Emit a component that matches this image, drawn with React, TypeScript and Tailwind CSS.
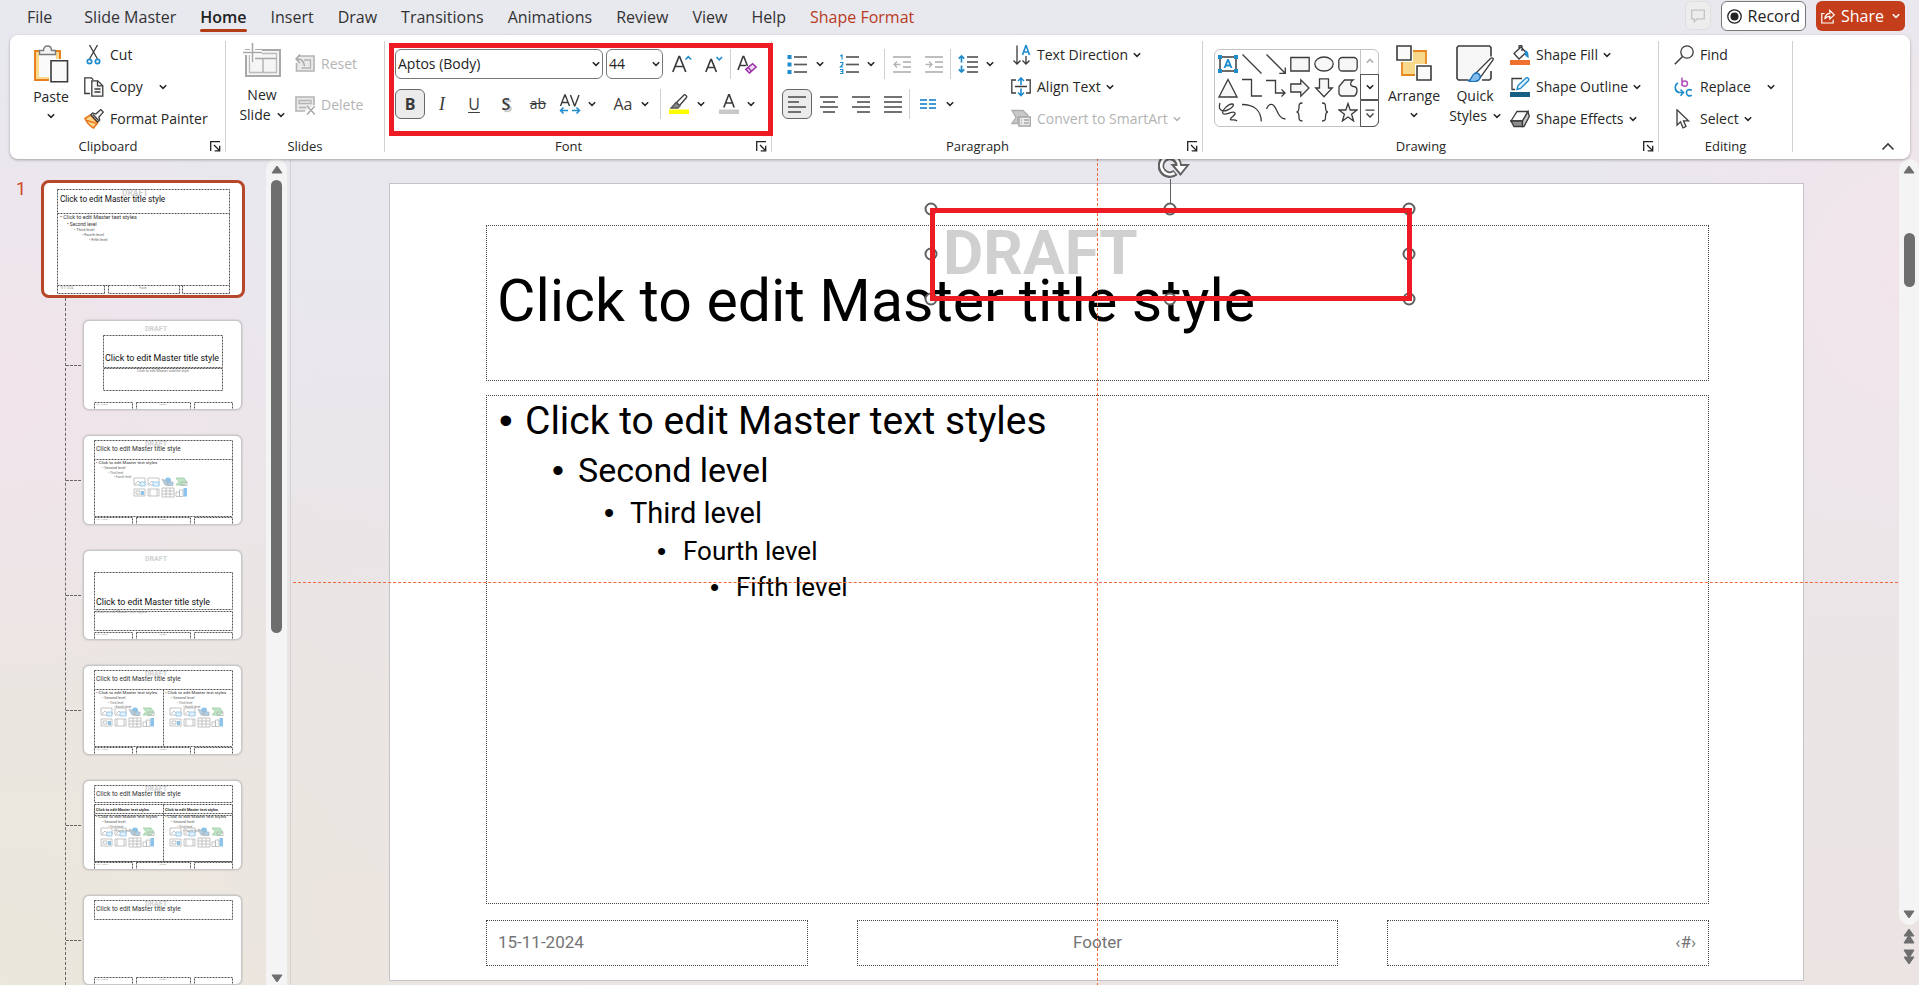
import type { ReactNode } from "react";

const INK = "#3b3b3b";
const BLUE = "#1e8bcd";

/* ---------- small building blocks ---------- */

function Icon({ w = 20, h = 20, children, className = "" }: { w?: number; h?: number; children: ReactNode; className?: string }) {
  return (
    <svg width={w} height={h} viewBox={`0 0 ${w} ${h}`} fill="none" stroke={INK} strokeWidth="1.3" aria-hidden="true" className={`shrink-0 ${className}`}>
      {children}
    </svg>
  );
}

function Chevron({ up = false, className = "" }: { up?: boolean; className?: string }) {
  return (
    <svg width="8" height="6" viewBox="0 0 8 6" fill="none" stroke="currentColor" strokeWidth="1.5" aria-hidden="true" className={`shrink-0 ${className}`}>
      <path d={up ? "M.8 4.6 4 1.4l3.2 3.2" : "M.8 1.2 4 4.4l3.2-3.2"} />
    </svg>
  );
}

function MenuArrow({ label, className = "" }: { label: string; className?: string }) {
  return (
    <button type="button" aria-label={label} className={`flex h-[30px] w-3 shrink-0 items-center justify-center ${className}`}>
      <Chevron />
    </button>
  );
}

function Tool({ label, active = false, className = "", children }: { label: string; active?: boolean; className?: string; children: ReactNode }) {
  return (
    <button
      type="button"
      aria-label={label}
      className={`flex h-[30px] shrink-0 items-center justify-center ${active ? "w-[30px] rounded-md border border-[#666] bg-[#ebebeb]" : "w-8"} ${className}`}
    >
      {children}
    </button>
  );
}

function Divider({ className = "" }: { className?: string }) {
  return <span className={`h-[30px] w-px shrink-0 bg-[#d0d0d0] ${className}`} />;
}

function Command({ icon, label, menu = false, disabled = false }: { icon: ReactNode; label: string; menu?: boolean; disabled?: boolean }) {
  return (
    <button type="button" disabled={disabled} className={`flex h-7 items-center gap-1.5 whitespace-nowrap ${disabled ? "text-[#b4b4b4]" : ""}`}>
      {icon}
      <span>{label}</span>
      {menu && <Chevron className="-ml-px" />}
    </button>
  );
}

function Group({ name, width, launcher = true, children }: { name: string; width: string; launcher?: boolean; children: ReactNode }) {
  return (
    <section aria-label={name} className={`flex h-[111px] shrink-0 flex-col justify-between border-r border-[#cfcfcf] ${width}`}>
      <div className="flex items-start">{children}</div>
      <div className="flex items-end text-[13px] leading-[11px]">
        <span className="flex-1 text-center">{name}</span>
        {launcher && (
          <button type="button" aria-label={`${name} options`} className="flex w-[19px] justify-end pr-1">
            <Icon w={11} h={11}>
              <path d="M.7 10V.7H10M4 4l5 5M9.7 4.8v5h-5" stroke="#222" />
            </Icon>
          </button>
        )}
      </div>
    </section>
  );
}

/* ---------- header ---------- */

const tabs = ["File", "Slide Master", "Home", "Insert", "Draw", "Transitions", "Animations", "Review", "View", "Help", "Shape Format"];

function TabBar() {
  return (
    <header className="flex h-[35px] shrink-0 items-start justify-between pr-3.5 pl-[27px] text-base">
      <nav className="flex gap-6 text-[#333]">
        {tabs.map((t) => (
          <a
            key={t}
            href="#"
            className={`flex h-[33px] items-center whitespace-nowrap ${t === "File" ? "mr-2" : ""} ${t === "Home" ? "relative font-semibold text-[#222]" : ""} ${t === "Shape Format" ? "text-[#b83b1d]" : ""}`}
          >
            {t}
            {t === "Home" && <span className="absolute inset-x-0 bottom-px h-[3px] rounded-full bg-[#b23a15]" />}
          </a>
        ))}
      </nav>
      <div className="flex gap-2.5 pt-px">
        <button type="button" aria-label="Comments" className="flex h-[29px] w-[26px] items-center justify-center rounded-md border border-[#dedede] bg-[#ededee]">
          <Icon w={14} h={14}>
            <path d="M.7 1.2h12.6v8.6H6.2l-3 3v-3H.7z" stroke="#c3c3c3" />
          </Icon>
        </button>
        <button type="button" className="flex h-[30px] items-center gap-1.5 rounded-md border border-[#777] bg-white px-[5px] text-[#222]">
          <Icon w={15} h={15}>
            <circle cx="7.5" cy="7.5" r="6.7" stroke="#222" />
            <circle cx="7.5" cy="7.5" r="4" fill="#222" stroke="none" />
          </Icon>
          Record
        </button>
        <button type="button" className="flex h-[30px] items-center gap-1.5 rounded-md bg-[#c43e1c] px-[5px] text-white">
          <Icon w={14} h={16}>
            <path d="M3.5 5.5H.8V15h11.4v-3.2M3.8 11c.3-3.800 2-5.500 5-5.700V2.500L13.300 6.900 8.800 11V8.300C6.500 8.300 5 9 3.800 11z" stroke="white" strokeWidth="1.2" />
          </Icon>
          Share
          <Chevron className="ml-0.5" />
        </button>
      </div>
    </header>
  );
}

/* ---------- ribbon groups ---------- */

function ClipboardGroup() {
  return (
    <Group name="Clipboard" width="w-[216px]">
      <button type="button" className="ml-[17px] flex w-12 flex-col items-center pt-1 leading-5">
        <Icon w={36} h={38}>
          <path d="M2 6h25v29H2z" fill="#f9d98d" stroke="#e8801d" strokeWidth="2" />
          <path d="M6 9h17v23H6z" fill="#fafafa" stroke="none" />
          <path d="M6.500 9.500V5.500h4c0-3 1.500-4.500 4-4.500s4 1.500 4 4.500h4v4z" fill="#f3f3f3" stroke="#7a7a7a" strokeWidth="1.400" />
          <path d="M16 14h20v24H16z" fill="white" stroke="none" />
          <path d="M18 15.700h16.500v21H18z" fill="#fafafa" strokeWidth="1.600" />
        </Icon>
        <span className="mt-1">Paste</span>
        <Chevron className="mt-1.5" />
      </button>
      <div className="ml-[9px] flex flex-col gap-1">
        <Command
          label="Cut"
          icon={
            <Icon>
              <path d="M5.500 0l8 14M13.500 0l-8 14" />
              <circle cx="5.500" cy="16.500" r="2.200" stroke={BLUE} strokeWidth="1.700" />
              <circle cx="13.500" cy="16.500" r="2.200" stroke={BLUE} strokeWidth="1.700" />
            </Icon>
          }
        />
        <div className="flex">
          <Command
            label="Copy"
            icon={
              <Icon>
                <path d="M6 16.500H.8V.800h6.500l2 2" />
                <path d="M7.800 3.800h6l5 5v10.400h-11z" fill="#f6f6f6" />
                <path d="M13.500 3.800v5h5M10.500 12h6M10.500 15h6" />
              </Icon>
            }
          />
          <MenuArrow label="Copy options" className="-my-px ml-3.5" />
        </div>
        <Command
          label="Format Painter"
          icon={
            <Icon>
              <path d="M1 9.500 6.500 6l7 8-4 5C6 17 3 14 1 9.500z" fill="#fbd68d" stroke="#e8741a" strokeWidth="1.600" />
              <path d="M3 11.500c4 1 7 2 9.500 3" stroke="#e8741a" />
              <path d="M6.800 5.800l2-1.800 3 1 5-4.500 2.500 2.600-4.400 5 .8 3-2 2z" fill="#f6f6f6" />
              <path d="M9 5.500l5.500 6" />
            </Icon>
          }
        />
      </div>
    </Group>
  );
}

function SlidesGroup() {
  return (
    <Group name="Slides" width="w-[159px]" launcher={false}>
      <button type="button" className="ml-2 flex w-14 flex-col items-center pt-0.5 leading-5">
        <Icon w={38} h={34}>
          <path d="M3 7h34v26H3z" fill="#f5f5f5" stroke="#a9a9a9" strokeWidth="2" />
          <path d="M6.500 10.500h27v19h-27z" fill="#f5f5f5" stroke="#bcbcbc" />
          <path d="M6.500 15.500h27M20 15.500v14" stroke="#a9a9a9" />
          <path d="M0 9.500h19M9.500 0v19" stroke="white" strokeWidth="5" />
          <path d="M0 9.500h19M9.500 0v19" stroke="#a9a9a9" strokeWidth="1.600" />
        </Icon>
        <span className="mt-2">New</span>
        <span className="flex items-center gap-1.5">
          Slide <Chevron />
        </span>
      </button>
      <div className="ml-[5px] flex flex-col gap-[13px] pt-[9px]">
        <Command
          disabled
          label="Reset"
          icon={
            <Icon>
              <path d="M3 2h16v15H1.500V9" fill="#e9e9e9" stroke="#b4b4b4" strokeWidth="1.600" />
              <path d="M9 6h6.500v8h-9" stroke="#b4b4b4" />
              <path d="M5 .500 1 5l4 4M1.500 5C6 4.500 9 7 9.500 12" stroke="#a8a8a8" strokeWidth="1.500" />
            </Icon>
          }
        />
        <Command
          disabled
          label="Delete"
          icon={
            <Icon>
              <path d="M10 16H1V2h18v8" fill="#e9e9e9" stroke="#b4b4b4" strokeWidth="1.600" />
              <path d="M4 5.500h12v3H4zM4 12.500h7" stroke="#b4b4b4" />
              <path d="M12 11l8 8.500M20 11l-8 8.500" stroke="#a8a8a8" strokeWidth="1.500" />
            </Icon>
          }
        />
      </div>
    </Group>
  );
}

function Letter({ children, className = "" }: { children: ReactNode; className?: string }) {
  return <span className={`leading-none text-[#3b3b3b] ${className}`}>{children}</span>;
}

function FontGroup() {
  return (
    <Group name="Font" width="w-[387px]">
      <div className="relative flex flex-col gap-2.5 pt-2 pl-2.5">
        <div className="flex">
          <div className="relative mr-[3px]">
            <select aria-label="Font name" className="block h-[30px] w-52 appearance-none rounded-md border border-[#777] bg-white pl-0.5 text-[#222]">
              <option>Aptos (Body)</option>
            </select>
            <Chevron className="pointer-events-none absolute top-3 right-[3px]" />
          </div>
          <div className="relative mr-[3px]">
            <select aria-label="Font size" className="block h-[30px] w-[57px] appearance-none rounded-md border border-[#777] bg-white pl-0.5 text-[#222]">
              <option>44</option>
            </select>
            <Chevron className="pointer-events-none absolute top-3 right-[3px]" />
          </div>
          <Tool label="Increase font size">
            <Icon>
              <path d="M.8 18 7 2.500h.600L13.800 18M3 12.500h8.600" strokeWidth="1.700" />
              <path d="M13.500 5.500 16.300 2.700l2.800 2.800" stroke={BLUE} strokeWidth="1.600" />
            </Icon>
          </Tool>
          <Tool label="Decrease font size">
            <Icon>
              <path d="M1.800 18 6.800 5.500h.600l5 12.500M3.700 13.500h6.800" strokeWidth="1.700" />
              <path d="M12.500 3l2.800 2.800L18.100 3" stroke={BLUE} strokeWidth="1.600" />
            </Icon>
          </Tool>
          <Divider />
          <Tool label="Clear formatting">
            <Icon>
              <path d="M1 16 6 2.500h.800L10.500 12M3 11.500h6" strokeWidth="1.600" />
              <path d="M8.800 15.300l6.800-5.600 3.600 3.300-6.700 6z" fill="#f3ddf5" stroke="#9a31a8" strokeWidth="1.600" />
              <path d="M11 13.500l3.500 3.500" stroke="#9a31a8" strokeWidth="1.500" />
            </Icon>
          </Tool>
        </div>
        <div className="flex">
          <Tool label="Bold" active className="mr-px">
            <Letter className="text-base font-bold">B</Letter>
          </Tool>
          <Tool label="Italic">
            <Letter className="font-['Liberation_Serif',serif] text-lg italic">I</Letter>
          </Tool>
          <Tool label="Underline">
            <Letter className="text-base underline underline-offset-2">U</Letter>
          </Tool>
          <Tool label="Text shadow">
            <Letter className="text-base font-semibold [text-shadow:2px_2px_1px_#bbb]">S</Letter>
          </Tool>
          <Tool label="Strikethrough">
            <Letter className="text-sm line-through">ab</Letter>
          </Tool>
          <Tool label="Character spacing">
            <Icon w={22}>
              <path d="M1.500 12 5.800 1h.400l4.300 11M3 8.500h6M11.500 1l4 10.800h.400L20 1" strokeWidth="1.400" />
              <path d="M1.500 16.500h7.500M4.500 13.500l-3 3 3 3M13 16.500h7.500M17.500 13.500l3 3-3 3" stroke={BLUE} strokeWidth="1.500" />
            </Icon>
          </Tool>
          <MenuArrow label="Character spacing options" className="mr-[9px]" />
          <Tool label="Change case">
            <Letter className="text-base">Aa</Letter>
          </Tool>
          <MenuArrow label="Change case options" className="mr-[9px]" />
          <Divider className="mr-0.5" />
          <Tool label="Text highlight">
            <Icon>
              <path d="M7.500 8.500 15 1c1-1 3.500 1.300 2.500 2.500l-7 8z" fill="#fafafa" />
              <path d="M7 8.500l4 3.500-2 2H2z" fill="#8a8a8a" stroke="#555" />
              <path d="M0 15.500h20v4.500H0z" fill="#ffff00" stroke="none" />
            </Icon>
          </Tool>
          <MenuArrow label="Text highlight options" className="mr-1.5" />
          <Tool label="Font color">
            <Icon>
              <path d="M4.800 13.500 9.700.800h.600l4.900 12.700M6.600 9h6.800" strokeWidth="1.600" />
              <path d="M0 15.500h20v4.500H0z" fill="#c8c8c8" stroke="none" />
            </Icon>
          </Tool>
          <MenuArrow label="Font color options" />
        </div>
        <div className="pointer-events-none absolute top-0.5 left-1 h-[93px] w-[384px] border-[5px] border-[#ed1c24]" />
      </div>
    </Group>
  );
}

function Lines({ rows, color = "#5a5a5a" }: { rows: [number, number, number][]; color?: string }) {
  return (
    <>
      {rows.map(([x1, x2, y]) => (
        <path key={y} d={`M${x1} ${y}H${x2}`} stroke={color} strokeWidth="1.7" />
      ))}
    </>
  );
}

function ParagraphGroup() {
  return (
    <Group name="Paragraph" width="w-[431px]">
      <div className="flex w-[230px] flex-col gap-2.5 pt-2 pl-[9px]">
        <div className="flex">
          <Tool label="Bullets">
            <Icon>
              <path d="M.500 1h4v4h-4zM.500 8.500h4v4h-4zM.500 16h4v4h-4z" fill={BLUE} stroke="none" />
              <Lines rows={[[7, 20, 3], [7, 20, 10.5], [7, 20, 18]]} />
            </Icon>
          </Tool>
          <MenuArrow label="Bullet options" className="mr-[7px] ml-px" />
          <Tool label="Numbering">
            <Icon>
              <path d="M1.300 2 3 1v4.500M1 8.500h2.800v2L1.300 13h2.900M1 15.500h2.800v4H1M1.500 17.500h2.300" stroke={BLUE} strokeWidth="1.200" />
              <Lines rows={[[7, 20, 3], [7, 20, 10.5], [7, 20, 18]]} />
            </Icon>
          </Tool>
          <MenuArrow label="Numbering options" className="mr-[7px]" />
          <Divider className="mr-px" />
          <Tool label="Decrease indent">
            <Icon>
              <Lines color="#b4b4b4" rows={[[1, 19, 3], [11, 19, 8], [11, 19, 13], [1, 19, 18]]} />
              <path d="M8.500 10.500H2M5 7.500l-3 3 3 3" stroke="#b4b4b4" />
            </Icon>
          </Tool>
          <Tool label="Increase indent">
            <Icon>
              <Lines color="#b4b4b4" rows={[[1, 19, 3], [11, 19, 8], [11, 19, 13], [1, 19, 18]]} />
              <path d="M1.500 10.500H8M5 7.500l3 3-3 3" stroke="#b4b4b4" />
            </Icon>
          </Tool>
          <Divider className="mr-px" />
          <Tool label="Line spacing">
            <Icon>
              <path d="M3.500 2v6.500M.800 4.700l2.700-2.700 2.700 2.700M3.500 11.500V18M.800 15.300 3.500 18l2.700-2.700" stroke={BLUE} strokeWidth="1.700" />
              <Lines rows={[[9, 20, 3], [9, 20, 8], [9, 20, 13], [9, 20, 18]]} />
            </Icon>
          </Tool>
          <MenuArrow label="Line spacing options" />
        </div>
        <div className="flex">
          <Tool label="Align left" active className="mr-px ml-px">
            <Icon>
              <Lines rows={[[1, 19, 3], [1, 12, 8], [1, 19, 13], [1, 14, 18]]} />
            </Icon>
          </Tool>
          <Tool label="Align center">
            <Icon>
              <Lines rows={[[1, 19, 3], [4, 16, 8], [1, 19, 13], [4, 16, 18]]} />
            </Icon>
          </Tool>
          <Tool label="Align right">
            <Icon>
              <Lines rows={[[1, 19, 3], [6, 19, 8], [1, 19, 13], [6, 19, 18]]} />
            </Icon>
          </Tool>
          <Tool label="Justify">
            <Icon>
              <Lines rows={[[1, 19, 3], [1, 19, 8], [1, 19, 13], [1, 19, 18]]} />
            </Icon>
          </Tool>
          <Divider className="mr-0.5" />
          <Tool label="Columns">
            <Icon>
              <Lines color={BLUE} rows={[[2, 9, 6], [2, 9, 10], [2, 9, 14]]} />
              <Lines color={BLUE} rows={[[11, 18, 6], [11, 18, 10], [11, 18, 14]]} />
            </Icon>
          </Tool>
          <MenuArrow label="Column options" />
        </div>
      </div>
      <div className="ml-[9px] flex flex-col gap-1">
        <Command
          menu
          label="Text Direction"
          icon={
            <Icon>
              <path d="M6 .500V19M2.500 15.500 6 19l3.500-3.500M15 11v8M11.500 15.500 15 19l3.500-3.500" />
              <path d="M11.500 10 14.800.800h.400L18.500 10M12.700 7h4.600" stroke={BLUE} strokeWidth="1.600" />
            </Icon>
          }
        />
        <Command
          menu
          label="Align Text"
          icon={
            <Icon>
              <path d="M5 3H.800v13H5M15 3h4.200v13H15M4 9.500h12" />
              <path d="M10 8V1M7 4l3-3 3 3M10 11.500v7M7 15.500l3 3 3-3" stroke={BLUE} strokeWidth="1.600" />
            </Icon>
          }
        />
        <Command
          menu
          disabled
          label="Convert to SmartArt"
          icon={
            <Icon>
              <path d="M1 1.500h11l5 5-2 2H7v6H1l4-6z" fill="#c9c9c9" stroke="#adadad" />
              <path d="M8 8h11.500v9H8z" fill="#ededed" stroke="#a5a5a5" strokeWidth="1.500" />
              <path d="M10 11h1M13 11h5M10 14h1M13 14h5" stroke="#a5a5a5" />
            </Icon>
          }
        />
      </div>
    </Group>
  );
}

const shapes: { name: string; art: ReactNode }[] = [
  {
    name: "Text box",
    art: (
      <>
        <path d="M2 3h16v14H2z" strokeWidth="1.500" />
        <path d="M0 1h4v4H0zM16 1h4v4h-4zM0 15h4v4H0zM16 15h4v4h-4z" fill={BLUE} stroke="none" />
        <path d="M6.500 14 9.800 6h.400l3.300 8M7.800 11.500h4.400" stroke={BLUE} strokeWidth="1.800" />
      </>
    ),
  },
  { name: "Line", art: <path d="M.500.500l19 19" /> },
  { name: "Arrow", art: <path d="M.500.500l19 19M19.300 13.500v6h-6" /> },
  { name: "Rectangle", art: <path d="M.800 3.500h18.400v13.500H.800z" fill="#f7f7f7" /> },
  { name: "Oval", art: <ellipse cx="10" cy="10" rx="9.200" ry="7" fill="#f7f7f7" /> },
  { name: "Rounded rectangle", art: <rect x=".8" y="3.5" width="18.4" height="13.5" rx="3.500" fill="#f7f7f7" /> },
  { name: "Triangle", art: <path d="M10 1.500 19 19H1z" fill="#f7f7f7" /> },
  { name: "Elbow connector", art: <path d="M0 1.500h9.500V18H20" /> },
  { name: "Elbow arrow", art: <path d="M0 2.500h9.500V15H19M15.500 11.500 19 15l-3.500 3.500" /> },
  { name: "Right arrow", art: <path d="M.800 6h10V1.800L19 10l-8.200 8.200V14H.800z" fill="#f7f7f7" /> },
  { name: "Down arrow", art: <path d="M5.500.800h9V10h3.800L10 18.800 1.700 10h3.800z" fill="#f7f7f7" /> },
  { name: "Freeform shape", art: <path d="M1 16V8.500L6.500 2h8.500c-3 2-3.500 6 .500 6.500 2 0 3.500 1.500 3.500 4 0 2.500-1 4.500-2.500 5.500H3z" fill="#f7f7f7" /> },
  { name: "Scribble", art: <path d="M2 1C0 7 3 10 8.500 8.500S17.500 2 14 2 3 8.500 5 11.500s9-3 11.500-1S13 15 12.500 17s4.500-.500 6.500 2" /> },
  { name: "Arc", art: <path d="M0 2.500c12 0 19 6 19.300 17" /> },
  { name: "Curve", art: <path d="M.500 7C3 1 7 .500 10 7s5 10 9.500 10" /> },
  { name: "Left brace", art: <path d="M12.500 1C9 1 9 2.500 9 5s0 5-2.500 5C9 10 9 12.500 9 15s0 4 3.500 4" /> },
  { name: "Right brace", art: <path d="M8 1c3.500 0 3.500 1.500 3.500 4s0 5 2.500 5c-2.500 0-2.500 2.500-2.500 5s0 4-3.500 4" /> },
  { name: "Star", art: <path d="M10 1.500l2.200 6.500H19l-5.400 4.200L15.600 19 10 15l-5.600 4 2-6.800L1 8h6.800z" fill="#f7f7f7" /> },
];

function DrawingGroup() {
  return (
    <Group name="Drawing" width="w-[456px]">
      <div className="mt-2 ml-[11px] flex h-[78px] rounded-md border border-[#c4c4c4]">
        <div className="grid grid-cols-6 py-0.5 pl-px">
          {shapes.map((s) => (
            <button key={s.name} type="button" aria-label={s.name} className="flex h-6 w-6 items-center justify-center">
              <Icon>{s.art}</Icon>
            </button>
          ))}
        </div>
        <div className="-my-px -mr-px flex w-[19px] flex-col">
          <button type="button" aria-label="Previous shapes" className="flex flex-1 items-center justify-center border-l border-[#c4c4c4] text-[#b0b0b0]">
            <Chevron up />
          </button>
          <button type="button" aria-label="Next shapes" className="flex flex-1 items-center justify-center border border-[#555]">
            <Chevron />
          </button>
          <button type="button" aria-label="All shapes" className="flex flex-1 items-center justify-center rounded-br-md border border-[#555]">
            <Icon w={10} h={10}>
              <path d="M.500 1.200h9M1.500 4.500 5 8l3.500-3.500" />
            </Icon>
          </button>
        </div>
      </div>
      <button type="button" className="ml-[7px] flex w-14 flex-col items-center pt-1 leading-5">
        <Icon w={36} h={36}>
          <path d="M6 6h24v24H6z" fill="#f8d98b" stroke="#e8871e" strokeWidth="1.800" />
          <path d="M0 0h17v17H0zM19 19h17v17H19z" fill="white" stroke="none" />
          <path d="M1 1h14v14H1zM21 21h14v14H21z" fill="#fafafa" strokeWidth="1.600" />
        </Icon>
        <span className="mt-[5px]">Arrange</span>
        <Chevron className="mt-1.5" />
      </button>
      <button type="button" className="ml-[5px] flex w-14 flex-col items-center pt-1 leading-5">
        <Icon w={38} h={37}>
          <path d="M12 35H2.500L1 33.500V2.500L2.500 1h31L35 2.500v9M35 26v7.500L33.500 35H26" fill="#f7f7f7" strokeWidth="1.600" />
          <path d="M20 28 34 14c2-2 4-1 3 1L24 33z" fill="white" />
          <path d="M12 35.500c4 0 3-5 6.500-7 3-1.500 6.500 1 5.500 4.500-1 3.500-7 5-12 2.500z" fill="#84bdeb" stroke="#1e6fb8" strokeWidth="1.400" />
        </Icon>
        <span className="mt-1">Quick</span>
        <span className="flex items-center gap-1.5">
          Styles <Chevron />
        </span>
      </button>
      <div className="ml-[7px] flex flex-col gap-1">
        <Command
          menu
          label="Shape Fill"
          icon={
            <Icon>
              <path d="M4 8.500 11 2l5 5.500-7 6.500zM9 4.500V1.500C9 0 12 0 12 1.500V6" fill="#fafafa" />
              <path d="M15 6c2 0 3 2 3 6-1.500-1-2.500-2-3-4" fill={BLUE} stroke={BLUE} />
              <path d="M0 15h20v5H0z" fill="#ee7130" stroke="none" />
            </Icon>
          }
        />
        <Command
          menu
          label="Shape Outline"
          icon={
            <Icon>
              <path d="M12 1.500H2v11h3" />
              <path d="M7 12.500l1-4L16 1c1.500-1 3.500 1 2.500 2.500L10.500 11.500z" fill="#e6f2fb" stroke={BLUE} strokeWidth="1.400" />
              <path d="M0 15h20v5H0z" fill="#155f82" stroke="none" />
            </Icon>
          }
        />
        <Command
          menu
          label="Shape Effects"
          icon={
            <Icon>
              <path d="M1 12 7 2.500h11L12.500 12z" fill="#fafafa" />
              <path d="M1 12h11.500v5.500H4z" fill="#8f8f8f" />
              <path d="M12.500 12 18 2.500l1.300 5-5.300 10h-1.500z" fill="#c6c6c6" />
            </Icon>
          }
        />
      </div>
    </Group>
  );
}

function EditingGroup() {
  return (
    <Group name="Editing" width="w-[134px]" launcher={false}>
      <div className="ml-[15px] flex flex-col gap-1">
        <Command
          label="Find"
          icon={
            <Icon>
              <circle cx="13" cy="7" r="6.200" fill="#fafafa" />
              <path d="M8.500 11.500.800 19.300" strokeWidth="1.500" />
            </Icon>
          }
        />
        <div className="flex">
          <Command
            label="Replace"
            icon={
              <Icon>
                <path d="M8 .500v8.500M8 6.500c0-3.500 5.500-3.500 5.500 0s-5.500 3.500-5.500 0" stroke="#b14fbd" strokeWidth="1.500" />
                <path d="M17.800 13.200c-4-1.800-5.500.800-5.300 2.800s2 3.800 5.300 2.300M4 6C0 8 .500 14.500 5 15.500h4M6.500 12.500l3 3-3 3.300" stroke={BLUE} strokeWidth="1.600" />
              </Icon>
            }
          />
          <MenuArrow label="Replace options" className="-my-px ml-3.5" />
        </div>
        <Command
          menu
          label="Select"
          icon={
            <Icon>
              <path d="M3 .800v15.500l3.500-3.500 2.500 6 3-1.300-2.500-5.700h5z" fill="#fafafa" />
            </Icon>
          }
        />
      </div>
    </Group>
  );
}

function Ribbon() {
  return (
    <div className="relative z-10 mr-[9px] ml-2.5 flex h-[124px] shrink-0 rounded-lg bg-white py-1.5 shadow-[0_1px_3px_rgba(0,0,0,0.3)]">
      <ClipboardGroup />
      <SlidesGroup />
      <FontGroup />
      <ParagraphGroup />
      <DrawingGroup />
      <EditingGroup />
      <div className="flex flex-1 items-end justify-end pr-[15px]">
        <button type="button" aria-label="Collapse ribbon">
          <Icon w={14} h={12}>
            <path d="M1.500 8.500 7 3l5.500 5.500" strokeWidth="1.600" />
          </Icon>
        </button>
      </div>
    </div>
  );
}

/* ---------- thumbnails ---------- */

function Dashed({ x, y, w, h }: { x: number; y: number; w: number; h: number }) {
  return <rect x={x + 0.5} y={y + 0.5} width={w} height={h} fill="none" stroke="#555" strokeDasharray="2 1" />;
}

/* A frame without its top edge, for a box that hangs from the one above it. */
function OpenFrame({ x, y, w, h, split = false }: { x: number; y: number; w: number; h: number; split?: boolean }) {
  const left = x + 0.5;
  const top = y + 0.5;
  return (
    <g fill="none" stroke="#555" strokeDasharray="2 1">
      <path d={`M${left} ${top}v${h}h${w}`} />
      <path d={`M${left + w} ${top}v${h}`} />
      {split && <path d={`M${left + w / 2} ${top}v${h}`} />}
    </g>
  );
}

function Words({ x, y, size, children, bold = false, fill = "#333", anchor = "start" }: { x: number; y: number; size: number; children: ReactNode; bold?: boolean; fill?: string; anchor?: "start" | "middle" | "end" }) {
  return (
    <text x={x} y={y} fontSize={size} fontWeight={bold ? 700 : 400} fill={fill} textAnchor={anchor}>
      {children}
    </text>
  );
}

function Placeholders({ x, y }: { x: number; y: number }) {
  return (
    <g transform={`translate(${x} ${y})`} fill="none" stroke="#b5b5b5" strokeWidth=".8">
      <path d="M1 1h11v7H1zM2 7l3-3 3 3M15 1h11v7H15zM16 7l3-3 3 3" />
      <path d="M7 5h5v4H7zM20 5h6v4h-6z" fill="#e3f1fb" stroke="#8cc3ea" />
      <circle cx="35" cy="3.500" r="3" fill="#8cc3ea" stroke="none" />
      <path d="M29 2l6 3v3h-3zM34 5h6v3.500h-6z" fill="#a9d1ee" />
      <path d="M43 1h8l3 4-3 3h-8l3-3.500z" fill="#bfe5c5" stroke="#9ccba4" />
      <path d="M48 5h6v3.500h-6zM1 12h11v7H1zM3 14h4v3H3zM15 12h11v7H15zM17 12v7M24 12v7M29 11h12v9H29zM29 14h12M29 17h12M33 11v9M37 11v9M43 15h3.500v4.500H43zM46.500 13H50v6.500h-3.500z" />
      <path d="M50.500 11H54v8.500h-3.500zM8 14h3v4H8z" fill="#8cc3ea" stroke="none" />
    </g>
  );
}

function Levels({ x, y }: { x: number; y: number }) {
  return (
    <>
      <Words x={x} y={y} size={4.4}>• Click to edit Master text styles</Words>
      <Words x={x + 6} y={y + 5} size={3.8} fill="#555">• Second level</Words>
      <Words x={x + 12} y={y + 10} size={3} fill="#777">• Third level</Words>
      <Words x={x + 18} y={y + 14} size={3} fill="#777">• Fourth level</Words>
    </>
  );
}

function LayoutTitle({ height = 19 }: { height?: number }) {
  return (
    <>
      <Words x={62} y={11} size={7} bold fill="#cfcfcf">DRAFT</Words>
      <Dashed x={11} y={5} w={138} h={height} />
      <Words x={13} y={16} size={6.6}>Click to edit Master title style</Words>
    </>
  );
}

function LayoutFooters() {
  return (
    <>
      <Dashed x={11} y={82} w={38} h={10} />
      <Dashed x={53} y={82} w={54} h={10} />
      <Dashed x={111} y={82} w={38} h={10} />
      <Words x={13} y={85} size={2.4} fill="#888">15-11-2024</Words>
      <Words x={80} y={85} size={2.4} fill="#888" anchor="middle">Footer</Words>
    </>
  );
}

const layouts: { name: string; art: ReactNode }[] = [
  {
    name: "Title Slide",
    art: (
      <>
        <Words x={62} y={11} size={7} bold fill="#cfcfcf">DRAFT</Words>
        <Dashed x={20} y={15} w={119} h={32} />
        <Dashed x={20} y={48} w={119} h={22} />
        <Words x={22} y={41} size={8.9} fill="#111">Click to edit Master title style</Words>
        <Words x={80} y={52} size={3.6} fill="#777" anchor="middle">Click to edit Master subtitle style</Words>
      </>
    ),
  },
  {
    name: "Title and Content",
    art: (
      <>
        <LayoutTitle />
        <OpenFrame x={11} y={24} w={138} h={57} />
        <Levels x={13} y={29} />
        <Placeholders x={50} y={42} />
      </>
    ),
  },
  {
    name: "Section Header",
    art: (
      <>
        <Words x={62} y={11} size={7} bold fill="#cfcfcf">DRAFT</Words>
        <Dashed x={11} y={22} w={138} h={37} />
        <Dashed x={11} y={61} w={138} h={19} />
        <Words x={13} y={55} size={8.9} fill="#111">Click to edit Master title style</Words>
        <Words x={13} y={63} size={3.8} fill="#888">Click to edit Master text styles</Words>
      </>
    ),
  },
  {
    name: "Two Content",
    art: (
      <>
        <LayoutTitle />
        <OpenFrame split x={11} y={24} w={138} h={57} />
        <Levels x={13} y={29} />
        <Levels x={82} y={29} />
        <Placeholders x={17} y={42} />
        <Placeholders x={86} y={42} />
      </>
    ),
  },
  {
    name: "Comparison",
    art: (
      <>
        <LayoutTitle height={17} />
        <Dashed x={11} y={24} w={138} h={9} />
        <OpenFrame split x={11} y={24} w={138} h={57} />
        <Dashed x={11} y={35} w={138} h={46} />
        <Words x={13} y={31} size={3.9} bold>Click to edit Master text styles</Words>
        <Words x={82} y={31} size={3.9} bold>Click to edit Master text styles</Words>
        <Levels x={13} y={38} />
        <Levels x={82} y={38} />
        <Placeholders x={17} y={47} />
        <Placeholders x={86} y={47} />
      </>
    ),
  },
  { name: "Title Only", art: <LayoutTitle /> },
];

function Sidebar() {
  return (
    <aside aria-label="Slide masters" className="flex w-[266px] shrink-0 flex-col overflow-hidden pt-[21px] font-[Roboto,sans-serif]">
      <div className="flex shrink-0">
        <span className="w-[41px] shrink-0 pl-4 text-lg leading-[18px] text-[#d24726]">1</span>
        <button type="button" aria-label="Office Theme slide master" className="h-[118px] w-[204px] overflow-hidden rounded-lg border-[3px] border-[#b7472a] bg-white">
          <svg width="198" height="112" viewBox="0 0 198 112" aria-hidden="true">
            <Words x={78} y={13} size={8.4} bold fill="#cfcfcf">DRAFT</Words>
            <Dashed x={13} y={6} w={172} h={24} />
            <OpenFrame x={13} y={30} w={172} h={72} />
            <OpenFrame x={13} y={102} w={47} h={8} />
            <OpenFrame x={64} y={102} w={71} h={8} />
            <OpenFrame x={138} y={102} w={47} h={8} />
            <Words x={16} y={19} size={8.2} fill="#111">Click to edit Master title style</Words>
            <Words x={16} y={36} size={5.5}>• Click to edit Master text styles</Words>
            <Words x={23} y={43} size={4.8}>• Second level</Words>
            <Words x={30} y={48} size={4} fill="#555">• Third level</Words>
            <Words x={38} y={53} size={3.8} fill="#555">• Fourth level</Words>
            <Words x={45} y={58} size={3.8} fill="#555">• Fifth level</Words>
            <Words x={16} y={106} size={2.6} fill="#888">15-11-2024</Words>
            <Words x={99} y={106} size={2.6} fill="#888" anchor="middle">Footer</Words>
          </svg>
        </button>
      </div>
      <ul className="ml-[65px] flex shrink-0 flex-col gap-[25px] border-l border-dashed border-[#666] pt-[22px]">
        {layouts.map((l) => (
          <li key={l.name} className="flex items-center">
            <span className="mr-0.5 w-[15px] border-t border-dashed border-[#666]" />
            <button type="button" aria-label={l.name} className="h-[90px] w-[159px] overflow-hidden rounded-md border border-[#c6c6c6] bg-white shadow-[0_0_2px_rgba(0,0,0,0.25)]">
              <svg width="157" height="88" viewBox="1 1 157 88" aria-hidden="true">
                {l.art}
                <LayoutFooters />
              </svg>
            </button>
          </li>
        ))}
      </ul>
    </aside>
  );
}

function Triangle({ down = false, double = false }: { down?: boolean; double?: boolean }) {
  return (
    <svg width="12" height={double ? 16 : 9} viewBox={double ? "0 0 12 16" : "0 0 12 9"} fill="#6e6e6e" stroke="#6e6e6e" strokeLinejoin="round" aria-hidden="true" className={`shrink-0 ${down ? "rotate-180" : ""}`}>
      <path d={double ? "M6 1 11 8H1zM6 7l5 8H1z" : "M6 1l5 7H1z"} />
    </svg>
  );
}

/* ---------- slide ---------- */

function Handle({ className }: { className: string }) {
  return <span className={`absolute h-[13px] w-[13px] -translate-x-1/2 -translate-y-1/2 rounded-full border-2 border-[#606060] bg-white ${className}`} />;
}

const levels = [
  { text: "Click to edit Master text styles", style: "text-[39px] leading-[48px]" },
  { text: "Second level", style: "pl-[53px] text-[34px] leading-[50px]" },
  { text: "Third level", style: "pl-[105px] text-[29px] leading-[36px]" },
  { text: "Fourth level", style: "pl-[158px] text-[26px] leading-[40px]" },
  { text: "Fifth level", style: "pl-[211px] text-[26px] leading-[32px]" },
];

function Slide() {
  return (
    <div className="relative mt-6 mr-[95px] ml-[98px] flex aspect-[1415/798] flex-col border border-[#c4c4c8] bg-white pt-[41px] pr-[94px] pb-3.5 pl-24 font-[Roboto,sans-serif] text-black">
      <div className="absolute top-[25px] left-[541px] flex h-[90px] w-[478px] pl-3">
        <span className="text-[62px] leading-[88px] font-bold text-[#d0d0d0]">DRAFT</span>
      </div>
      <div className="relative flex h-[156px] items-center border border-dotted border-[#444] pb-1.5 pl-2.5">
        <h1 className="text-[59px] leading-none whitespace-nowrap">Click to edit Master title style</h1>
      </div>
      <div className="mt-3.5 flex-1 border border-dotted border-[#444] pt-px pl-3">
        <ul>
          {levels.map((l) => (
            <li key={l.text} className={`flex whitespace-nowrap ${l.style}`}>
              <span aria-hidden="true" className="w-[26px] font-['Liberation_Sans',sans-serif]">•</span>
              {l.text}
            </li>
          ))}
        </ul>
      </div>
      <div className="mt-4 grid h-[46px] grid-cols-[322fr_481fr_322fr] gap-[49px] text-[17px] leading-[42px] text-[#757575]">
        <div className="border border-dotted border-[#444] pl-[11px]">15-11-2024</div>
        <div className="border border-dotted border-[#444] text-center">Footer</div>
        <div className="border border-dotted border-[#444] pr-3 text-right">‹#›</div>
      </div>

      {/* guides */}
      <div className="absolute -top-[26px] -bottom-1.5 left-1/2 border-l border-dashed border-[#f0693f]" />
      <div className="absolute top-1/2 -right-[95px] -left-[97px] border-t border-dashed border-[#f0693f]" />

      {/* selected text box */}
      <div className="absolute top-[25px] left-[541px] h-[90px] w-[478px]">
        <span className="absolute -top-[30px] left-1/2 h-6 w-px bg-[#606060]" />
        <Icon w={32} h={28} className="absolute -top-[57px] left-1/2 -ml-3">
          <path d="M17.500 20.500A8.800 8.800 0 1 1 20.500 13" stroke="#606060" strokeWidth="6.500" />
          <path d="M14.500 13h15.500L22.500 22.500z" fill="#fff" stroke="#606060" strokeWidth="2" />
          <path d="M16.500 21.200A8.800 8.800 0 1 1 20.800 14.500" stroke="#fff" strokeWidth="2.600" />
        </Icon>
        <Handle className="top-0 left-0" />
        <Handle className="top-0 left-1/2" />
        <Handle className="top-0 left-full" />
        <Handle className="top-1/2 left-0" />
        <Handle className="top-1/2 left-full" />
        <Handle className="top-full left-0" />
        <Handle className="top-full left-1/2" />
        <Handle className="top-full left-full" />
        <div className="absolute -top-px -right-[3px] -bottom-0.5 -left-px border-[5px] border-[#ed1c24]" />
      </div>
    </div>
  );
}

export default function App() {
  return (
    <div className="flex h-screen flex-col overflow-hidden bg-[#eae6ea] bg-[radial-gradient(circle_at_0%_40%,#f1e4ea_0%,transparent_16%),radial-gradient(circle_at_0%_100%,#ebe7dc_0%,transparent_28%),radial-gradient(circle_at_100%_28%,#f2e5eb_0%,transparent_18%),linear-gradient(180deg,#e8e8ef_0%,#e9e7ee_30%,#eae5e6_62%,#ece4e3_100%)] font-['Open_Sans',sans-serif] text-sm text-[#262626]">
      <TabBar />
      <Ribbon />
      <main className="flex min-h-0 flex-1">
        <Sidebar />
        <div className="mr-[3px] flex w-[21px] shrink-0 flex-col items-center rounded-t-full bg-[#f4f4f4] pt-1.5 pb-0.5">
          <Triangle />
          <div className="mt-1.5 h-[453px] w-[11px] rounded-full bg-[#6e6e6e]" />
          <div className="flex-1" />
          <Triangle down />
        </div>
        <div className="relative min-w-0 flex-1 overflow-hidden border-l border-[#d3d1d4]">
          <Slide />
        </div>
        <div className="flex w-5 shrink-0 flex-col items-center pb-5">
          <div className="flex w-full flex-1 flex-col items-center rounded-full bg-[#f4f4f4] pt-1.5 pb-1.5">
            <Triangle />
            <div className="mt-[59px] h-[54px] w-[11px] rounded-full bg-[#6e6e6e]" />
            <div className="flex-1" />
            <Triangle down />
          </div>
          <div className="mt-[3px] flex flex-col gap-[5px]">
            <Triangle double />
            <Triangle double down />
          </div>
        </div>
      </main>
    </div>
  );
}
